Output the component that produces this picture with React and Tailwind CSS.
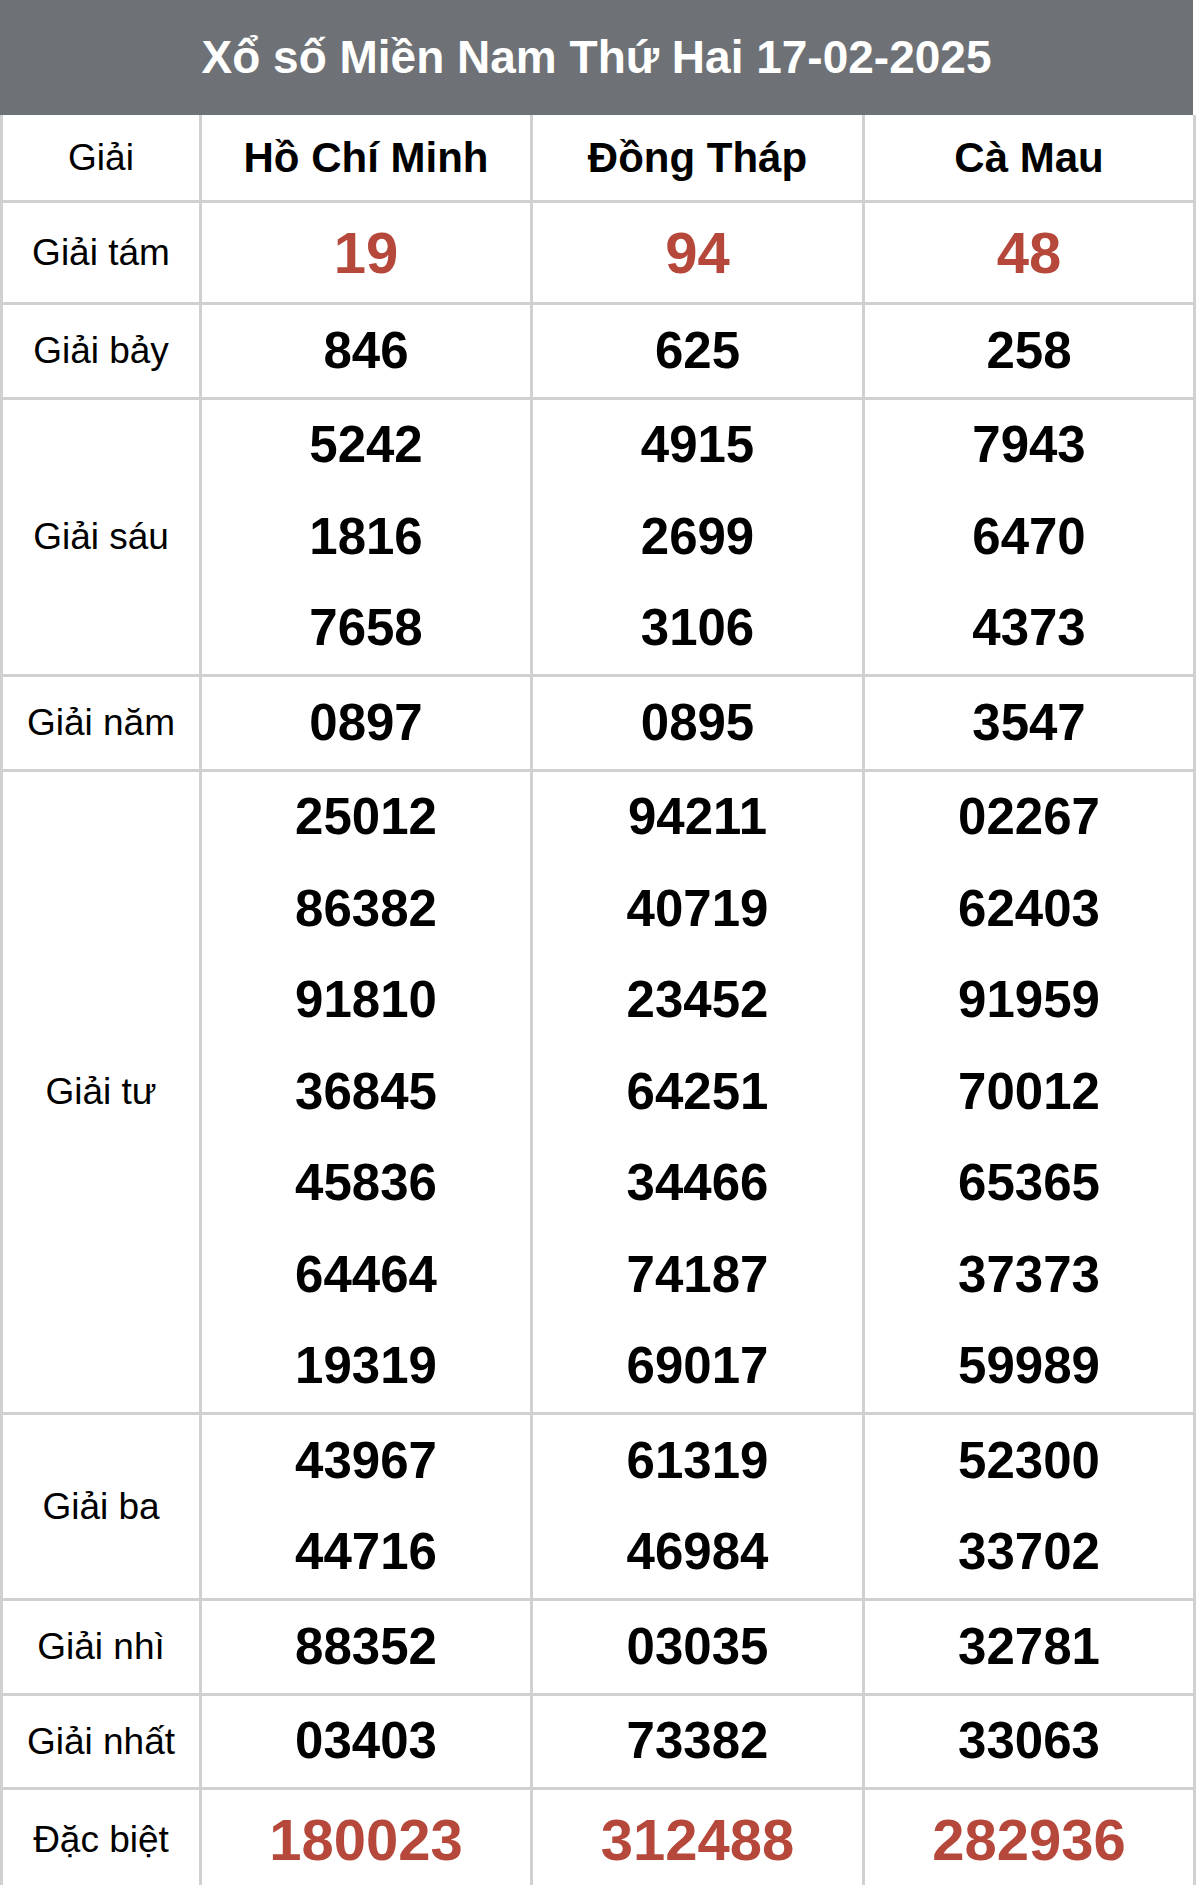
import React from 'react';

const PROVINCES = ['Hồ Chí Minh', 'Đồng Tháp', 'Cà Mau'];

// each row: label, lines per province, big = red special style
const ROWS = [
  { label: 'Giải tám', big: true, values: [['19'], ['94'], ['48']] },
  { label: 'Giải bảy', values: [['846'], ['625'], ['258']] },
  {
    label: 'Giải sáu',
    values: [
      ['5242', '1816', '7658'],
      ['4915', '2699', '3106'],
      ['7943', '6470', '4373'],
    ],
  },
  { label: 'Giải năm', values: [['0897'], ['0895'], ['3547']] },
  {
    label: 'Giải tư',
    values: [
      ['25012', '86382', '91810', '36845', '45836', '64464', '19319'],
      ['94211', '40719', '23452', '64251', '34466', '74187', '69017'],
      ['02267', '62403', '91959', '70012', '65365', '37373', '59989'],
    ],
  },
  {
    label: 'Giải ba',
    values: [
      ['43967', '44716'],
      ['61319', '46984'],
      ['52300', '33702'],
    ],
  },
  { label: 'Giải nhì', values: [['88352'], ['03035'], ['32781']] },
  { label: 'Giải nhất', values: [['03403'], ['73382'], ['33063']] },
  { label: 'Đặc biệt', big: true, values: [['180023'], ['312488'], ['282936']] },
];

const cellBase = 'border-r-[3px] border-[#d0d0d0] flex flex-col justify-center items-center';

function Row({ row }) {
  return (
    <div className="grid grid-cols-[202px_331px_332px_331px] border-b-[3px] border-[#d0d0d0]">
      <div className={`${cellBase} border-l-[3px] text-[37px] text-black`}>{row.label}</div>
      {row.values.map((lines, i) => (
        <div key={i} className={cellBase}>
          {lines.map((n, j) =>
            row.big ? (
              <div key={j} className="h-[99px] flex items-center text-[58px] font-bold text-[#b5483a]">
                {n}
              </div>
            ) : (
              <div key={j} className="h-[91.5px] flex items-center text-[51px] font-bold text-black">
                {n}
              </div>
            )
          )}
        </div>
      ))}
    </div>
  );
}

export default function App() {
  return (
    <div className="w-[1200px] min-h-[1885px] bg-white font-['Liberation_Sans',Arial,sans-serif]">
      <div className="w-[1196px]">
        <div className="h-[115px] w-[1193px] bg-[#6e7276] flex items-center justify-center text-white font-bold text-[46px]">
          Xổ số Miền Nam Thứ Hai 17-02-2025
        </div>
        <div className="grid grid-cols-[202px_331px_332px_331px] border-b-[3px] border-[#d0d0d0]">
          <div className={`${cellBase} border-l-[3px] h-[85px] text-[37px] text-black`}>Giải</div>
          {PROVINCES.map((p) => (
            <div key={p} className={`${cellBase} h-[85px] text-[42px] font-bold text-black`}>
              {p}
            </div>
          ))}
        </div>
        {ROWS.map((r) => (
          <Row key={r.label} row={r} />
        ))}
      </div>
    </div>
  );
}
